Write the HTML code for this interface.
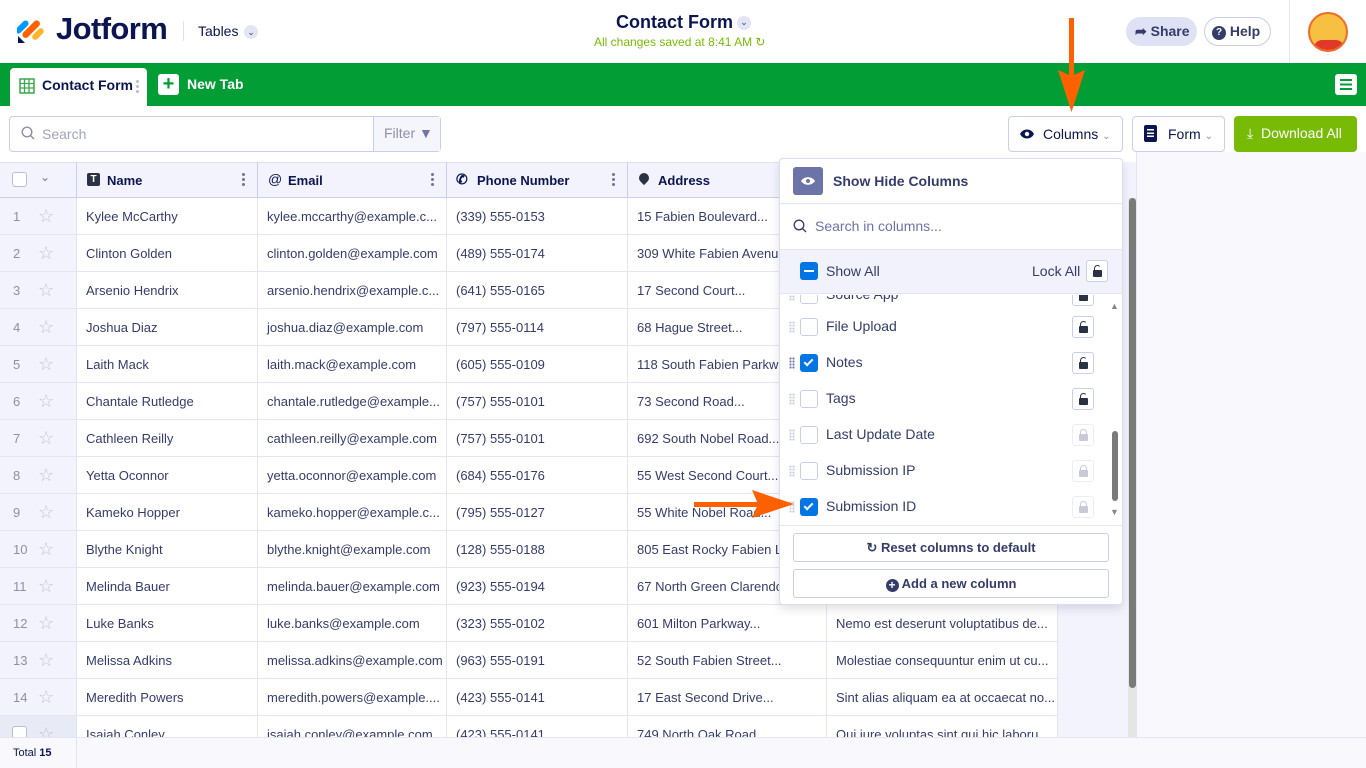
<!DOCTYPE html>
<html><head><meta charset="utf-8"><style>
*{box-sizing:border-box;margin:0;padding:0}
body{width:1366px;height:768px;overflow:hidden;font-family:"Liberation Sans",sans-serif;background:#fff;position:relative;color:#343c6a}
.abs{position:absolute}
.top{top:0;left:0;width:1366px;height:63px;background:#fff}
.green{top:63px;left:0;width:1366px;height:43px;background:#039d35}
.tab{left:10px;top:68px;width:137px;height:38px;background:#fff;border-radius:4px 4px 0 0;font-weight:bold;font-size:14px;color:#0a1551;padding:9px 0 0 32px}
.btn{border:1px solid #c8ceed;border-radius:4px;background:#fff;font-size:14px;color:#0a1551}
.hdr{top:162px;height:36px;background:#f3f3fe;border-bottom:1px solid #c8ceed;border-top:1px solid #dfe2f3}
.cell{position:absolute;height:37px;border-bottom:1px solid #e3e5f5;border-right:1px solid #e3e5f5;font-size:13px;color:#343c6a;padding:11px 0 0 9px;white-space:nowrap;overflow:hidden;background:#fff}
.lc{position:absolute;left:0;width:77px;height:37px;background:#f3f3fe;border-bottom:1px solid #e3e5f5;border-right:1px solid #dfe2f3;font-size:13px;color:#8d8fa8;padding:11px 0 0 13px}
.star{position:absolute;left:38px;top:9px;color:#c0c3d9;font-size:18px;line-height:18px}
.hc{position:absolute;top:162px;height:36px;border-right:1px solid #c8ceed;font-size:13px;font-weight:bold;color:#0a1551;padding:11px 0 0 30px}
.dots{position:absolute;right:12px;top:10px;width:3px;height:14px;background:radial-gradient(circle,#6f76a7 1.4px,transparent 1.6px) 0 0/3px 5px}
.panel{left:779px;top:158px;width:344px;height:447px;background:#fff;border:1px solid #dadef3;border-radius:4px;box-shadow:0 4px 10px rgba(0,0,0,.12)}
.prow{position:absolute;left:0;width:330px;height:36px;font-size:14px;color:#343c6a}
.cb{position:absolute;left:20px;top:9px;width:18px;height:18px;border:1px solid #c8ceed;border-radius:3px;background:#fff}
.cb.on{background:#0075e3;border-color:#0075e3}
.lock{position:absolute;left:292px;top:7px;width:22px;height:22px;border:1px solid #c8ceed;border-radius:3px;background:#fff}
.lock i{position:absolute;left:6px;top:9px;width:9px;height:7px;background:#2b3245;border-radius:1px}
.lock b{position:absolute;left:7px;top:4px;width:7px;height:7px;border:1.6px solid #2b3245;border-bottom:none;border-radius:4px 4px 0 0;border-right-color:transparent}
.lock.dis{border-color:#eceef7}.lock.dis i{background:#c8cad8}.lock.dis b{border-color:#c8cad8}
.grip{position:absolute;left:9px;top:12px;width:6px;height:12px;background:radial-gradient(circle,#c8ccde 1px,transparent 1.2px) 0 0/3px 3px}
</style></head><body>
<div class="abs top"></div>
<svg class="abs" style="left:17px;top:14px" width="28" height="30" viewBox="0 0 28 30">
<rect x="2" y="5" width="6" height="16" rx="3" transform="rotate(45 5 13)" fill="#0099ff"/>
<rect x="11" y="4" width="6.5" height="22" rx="3.2" transform="rotate(45 14 15)" fill="#ff6100"/>
<rect x="18" y="13" width="6" height="14" rx="3" transform="rotate(45 21 20)" fill="#ffb629"/>
<path d="M1 22 L1 29 L8 29 Z" fill="#0a1551"/>
</svg>
<div class="abs" style="left:56px;top:11px;font-size:31px;font-weight:bold;color:#0a1551;letter-spacing:-0.6px">Jotform</div>
<div class="abs" style="left:183px;top:21px;width:1px;height:20px;background:#dfe2f3"></div>
<div class="abs" style="left:198px;top:23px;font-size:14px;color:#0a1551">Tables</div>
<div class="abs" style="left:244px;top:25px;width:14px;height:14px;border-radius:7px;background:#e3e5f5;font-size:9px;text-align:center;line-height:14px;color:#343c6a">⌄</div>
<div class="abs" style="left:616px;top:12px;font-size:18px;font-weight:bold;color:#0a1551">Contact Form</div>
<div class="abs" style="left:737px;top:16px;width:14px;height:14px;border-radius:7px;background:#e3e5f5;font-size:9px;text-align:center;line-height:13px;color:#343c6a">⌄</div>
<div class="abs" style="left:594px;top:35px;font-size:12px;color:#78bb07">All changes saved at 8:41 AM ↻</div>
<div class="abs" style="left:1126px;top:17px;width:71px;height:29px;border-radius:15px;background:#dfe2f5;font-size:14px;font-weight:bold;color:#343c6a;padding:6px 0 0 9px">➦ Share</div>
<div class="abs" style="left:1204px;top:17px;width:67px;height:29px;border-radius:15px;border:1px solid #c8ceed;font-size:14px;font-weight:bold;color:#343c6a;padding:5px 0 0 7px"><span style="display:inline-block;width:14px;height:14px;border-radius:7px;background:#343c6a;color:#fff;font-size:10px;text-align:center;line-height:14px;vertical-align:1px">?</span> Help</div>
<div class="abs" style="left:1289px;top:0;width:1px;height:63px;background:#e3e5f5"></div>
<div class="abs" style="left:1308px;top:12px;width:40px;height:40px;border-radius:20px;background:#f8c043;border:2px solid #ef6a22;overflow:hidden"><div style="position:absolute;left:4px;top:26px;width:30px;height:14px;background:#e2382a;border-radius:8px 8px 0 0"></div></div>
<div class="abs green"></div>
<div class="abs tab">Contact Form<span style="position:absolute;right:8px;top:11px;width:3px;height:14px;background:radial-gradient(circle,#b8bdd8 1.4px,transparent 1.6px) 0 0/3px 5px"></span>
<svg style="position:absolute;left:9px;top:10px" width="16" height="16"><rect x="1" y="1" width="14" height="14" fill="none" stroke="#39a94d" stroke-width="1.5"/><path d="M1 5.5H15M1 10H15M5.5 1V15M10 1V15" stroke="#39a94d" stroke-width="1.3"/></svg></div>
<div class="abs" style="left:158px;top:74px;width:21px;height:21px;background:#fff;border-radius:3px;color:#039d35;font-size:20px;line-height:20px;text-align:center;font-weight:bold">+</div>
<div class="abs" style="left:187px;top:76px;font-size:14px;font-weight:bold;color:#fff">New Tab</div>
<div class="abs" style="left:1335px;top:74px;width:22px;height:21px;background:#fff;border-radius:3px"><div style="position:absolute;left:5px;top:5px;width:12px;height:11px;background:linear-gradient(#039d35 0 2px,transparent 2px 4.5px,#039d35 4.5px 6.5px,transparent 6.5px 9px,#039d35 9px 11px)"></div></div>
<div class="abs btn" style="left:9px;top:116px;width:432px;height:36px;"></div>
<div class="abs" style="left:373px;top:117px;width:67px;height:34px;background:#f5f6fc;border-left:1px solid #c8ceed;font-size:14px;color:#8d8fa8;padding:8px 0 0 10px">Filter <span style="color:#6f76a7">▼</span></div>
<svg class="abs" style="left:21px;top:126px" width="14" height="14"><circle cx="6" cy="6" r="4.8" fill="none" stroke="#8d8fa8" stroke-width="1.4"/><path d="M9.5 9.5L13 13" stroke="#8d8fa8" stroke-width="1.4"/></svg>
<div class="abs" style="left:42px;top:126px;font-size:14px;color:#a0a3bd">Search</div>
<div class="abs btn" style="left:1008px;top:116px;width:115px;height:36px;padding:9px 0 0 34px">Columns <span style="color:#8d8fa8;font-size:10px">⌄</span></div>
<svg class="abs" style="left:1019px;top:128px" width="16" height="12"><path d="M1 6C4 0 12 0 15 6C12 12 4 12 1 6Z" fill="#0a1551"/><circle cx="8" cy="6" r="2.2" fill="#fff"/></svg>
<div class="abs btn" style="left:1132px;top:116px;width:93px;height:36px;padding:9px 0 0 35px">Form <span style="color:#8d8fa8;font-size:10px">⌄</span></div>
<div class="abs" style="left:1144px;top:125px;width:13px;height:17px;background:#0a1551;border-radius:2px"><div style="margin:4px 3px;height:8px;background:linear-gradient(#fff 0 1.5px,transparent 1.5px 3.3px,#fff 3.3px 4.8px,transparent 4.8px 6.5px,#fff 6.5px 8px)"></div></div>
<div class="abs" style="left:1234px;top:116px;width:123px;height:36px;background:#78bb07;border-radius:4px;color:#fff;font-size:14px;padding:9px 0 0 13px">⤓&nbsp; Download All</div>
<div class="abs" style="left:1069px;top:18px;width:5px;height:60px;background:#ff6100"></div>
<svg class="abs" style="left:1058px;top:70px" width="27" height="42"><path d="M0 0L13.5 6L27 0L13.5 42Z" fill="#ff6100"/></svg>
<div class="abs" style="left:0;top:162px;width:1136px;height:575px;background:#f3f3fe"></div>
<div class="abs" style="left:1136px;top:152px;width:230px;height:585px;background:#f8f8fd;border-left:1px solid #e3e5f5"></div>
<div class="abs" style="left:1128px;top:198px;width:8px;height:539px;background:#e5e5e5"></div>
<div class="abs" style="left:1129px;top:198px;width:7px;height:490px;background:#7a7a7a;border-radius:4px"></div>
<div class="abs hdr" style="left:0;width:1058px"></div>
<div class="abs" style="left:12px;top:172px;width:15px;height:15px;border:1px solid #b8bdd8;border-radius:3px;background:#fff"></div>
<div class="abs" style="left:40px;top:170px;font-size:12px;color:#6f76a7">⌄</div>
<div class="abs" style="left:76px;top:162px;width:1px;height:36px;background:#c8ceed"></div>
<div class="hc" style="left:77px;width:181px">Name<span class="dots"></span><span style="position:absolute;left:10px;top:11px;width:13px;height:13px;background:#2b3245;border-radius:2px;color:#fff;font-size:10px;text-align:center;line-height:13px">T</span></div>
<div class="hc" style="left:258px;width:189px">Email<span class="dots"></span><span style="position:absolute;left:10px;top:9px;font-size:14px;font-weight:normal">@</span></div>
<div class="hc" style="left:447px;width:181px">Phone Number<span class="dots"></span><span style="position:absolute;left:9px;top:9px;font-size:14px">✆</span></div>
<div class="hc" style="left:628px;width:199px">Address<span style="position:absolute;left:11px;top:11px;width:10px;height:10px;border-radius:5px 5px 5px 0;transform:rotate(-45deg);background:#2b3245"></span></div>
<div class="hc" style="left:827px;width:231px">Notes</div>
<div class="abs" style="left:0;top:198px;width:1058px;height:539px;overflow:hidden">
<div style="position:absolute;top:0;left:0">
<div class="lc" style="top:0">1<span class="star">☆</span></div><div class="cell" style="top:0;left:77px;width:181px">Kylee McCarthy</div><div class="cell" style="top:0;left:258px;width:189px">kylee.mccarthy@example.c...</div><div class="cell" style="top:0;left:447px;width:181px">(339) 555-0153</div><div class="cell" style="top:0;left:628px;width:199px">15 Fabien Boulevard...</div><div class="cell" style="top:0;left:827px;width:231px"></div>
<div class="lc" style="top:37px">2<span class="star">☆</span></div><div class="cell" style="top:37px;left:77px;width:181px">Clinton Golden</div><div class="cell" style="top:37px;left:258px;width:189px">clinton.golden@example.com</div><div class="cell" style="top:37px;left:447px;width:181px">(489) 555-0174</div><div class="cell" style="top:37px;left:628px;width:199px">309 White Fabien Avenue</div><div class="cell" style="top:37px;left:827px;width:231px"></div>
<div class="lc" style="top:74px">3<span class="star">☆</span></div><div class="cell" style="top:74px;left:77px;width:181px">Arsenio Hendrix</div><div class="cell" style="top:74px;left:258px;width:189px">arsenio.hendrix@example.c...</div><div class="cell" style="top:74px;left:447px;width:181px">(641) 555-0165</div><div class="cell" style="top:74px;left:628px;width:199px">17 Second Court...</div><div class="cell" style="top:74px;left:827px;width:231px"></div>
<div class="lc" style="top:111px">4<span class="star">☆</span></div><div class="cell" style="top:111px;left:77px;width:181px">Joshua Diaz</div><div class="cell" style="top:111px;left:258px;width:189px">joshua.diaz@example.com</div><div class="cell" style="top:111px;left:447px;width:181px">(797) 555-0114</div><div class="cell" style="top:111px;left:628px;width:199px">68 Hague Street...</div><div class="cell" style="top:111px;left:827px;width:231px"></div>
<div class="lc" style="top:148px">5<span class="star">☆</span></div><div class="cell" style="top:148px;left:77px;width:181px">Laith Mack</div><div class="cell" style="top:148px;left:258px;width:189px">laith.mack@example.com</div><div class="cell" style="top:148px;left:447px;width:181px">(605) 555-0109</div><div class="cell" style="top:148px;left:628px;width:199px">118 South Fabien Parkway</div><div class="cell" style="top:148px;left:827px;width:231px"></div>
<div class="lc" style="top:185px">6<span class="star">☆</span></div><div class="cell" style="top:185px;left:77px;width:181px">Chantale Rutledge</div><div class="cell" style="top:185px;left:258px;width:189px">chantale.rutledge@example...</div><div class="cell" style="top:185px;left:447px;width:181px">(757) 555-0101</div><div class="cell" style="top:185px;left:628px;width:199px">73 Second Road...</div><div class="cell" style="top:185px;left:827px;width:231px"></div>
<div class="lc" style="top:222px">7<span class="star">☆</span></div><div class="cell" style="top:222px;left:77px;width:181px">Cathleen Reilly</div><div class="cell" style="top:222px;left:258px;width:189px">cathleen.reilly@example.com</div><div class="cell" style="top:222px;left:447px;width:181px">(757) 555-0101</div><div class="cell" style="top:222px;left:628px;width:199px">692 South Nobel Road...</div><div class="cell" style="top:222px;left:827px;width:231px"></div>
<div class="lc" style="top:259px">8<span class="star">☆</span></div><div class="cell" style="top:259px;left:77px;width:181px">Yetta Oconnor</div><div class="cell" style="top:259px;left:258px;width:189px">yetta.oconnor@example.com</div><div class="cell" style="top:259px;left:447px;width:181px">(684) 555-0176</div><div class="cell" style="top:259px;left:628px;width:199px">55 West Second Court...</div><div class="cell" style="top:259px;left:827px;width:231px"></div>
<div class="lc" style="top:296px">9<span class="star">☆</span></div><div class="cell" style="top:296px;left:77px;width:181px">Kameko Hopper</div><div class="cell" style="top:296px;left:258px;width:189px">kameko.hopper@example.c...</div><div class="cell" style="top:296px;left:447px;width:181px">(795) 555-0127</div><div class="cell" style="top:296px;left:628px;width:199px">55 White Nobel Road...</div><div class="cell" style="top:296px;left:827px;width:231px"></div>
<div class="lc" style="top:333px">10<span class="star">☆</span></div><div class="cell" style="top:333px;left:77px;width:181px">Blythe Knight</div><div class="cell" style="top:333px;left:258px;width:189px">blythe.knight@example.com</div><div class="cell" style="top:333px;left:447px;width:181px">(128) 555-0188</div><div class="cell" style="top:333px;left:628px;width:199px">805 East Rocky Fabien Lane</div><div class="cell" style="top:333px;left:827px;width:231px"></div>
<div class="lc" style="top:370px">11<span class="star">☆</span></div><div class="cell" style="top:370px;left:77px;width:181px">Melinda Bauer</div><div class="cell" style="top:370px;left:258px;width:189px">melinda.bauer@example.com</div><div class="cell" style="top:370px;left:447px;width:181px">(923) 555-0194</div><div class="cell" style="top:370px;left:628px;width:199px">67 North Green Clarendon</div><div class="cell" style="top:370px;left:827px;width:231px"></div>
<div class="lc" style="top:407px">12<span class="star">☆</span></div><div class="cell" style="top:407px;left:77px;width:181px">Luke Banks</div><div class="cell" style="top:407px;left:258px;width:189px">luke.banks@example.com</div><div class="cell" style="top:407px;left:447px;width:181px">(323) 555-0102</div><div class="cell" style="top:407px;left:628px;width:199px">601 Milton Parkway...</div><div class="cell" style="top:407px;left:827px;width:231px">Nemo est deserunt voluptatibus de...</div>
<div class="lc" style="top:444px">13<span class="star">☆</span></div><div class="cell" style="top:444px;left:77px;width:181px">Melissa Adkins</div><div class="cell" style="top:444px;left:258px;width:189px">melissa.adkins@example.com</div><div class="cell" style="top:444px;left:447px;width:181px">(963) 555-0191</div><div class="cell" style="top:444px;left:628px;width:199px">52 South Fabien Street...</div><div class="cell" style="top:444px;left:827px;width:231px">Molestiae consequuntur enim ut cu...</div>
<div class="lc" style="top:481px">14<span class="star">☆</span></div><div class="cell" style="top:481px;left:77px;width:181px">Meredith Powers</div><div class="cell" style="top:481px;left:258px;width:189px">meredith.powers@example....</div><div class="cell" style="top:481px;left:447px;width:181px">(423) 555-0141</div><div class="cell" style="top:481px;left:628px;width:199px">17 East Second Drive...</div><div class="cell" style="top:481px;left:827px;width:231px">Sint alias aliquam ea at occaecat no...</div>
<div class="lc" style="top:518px;background:#e8eaf6"><span style="position:absolute;left:12px;top:10px;width:15px;height:15px;border:1px solid #b8bdd8;border-radius:3px;background:#fff"></span><span class="star">☆</span></div><div class="cell" style="top:518px;left:77px;width:181px">Isaiah Conley</div><div class="cell" style="top:518px;left:258px;width:189px">isaiah.conley@example.com</div><div class="cell" style="top:518px;left:447px;width:181px">(423) 555-0141</div><div class="cell" style="top:518px;left:628px;width:199px">749 North Oak Road</div><div class="cell" style="top:518px;left:827px;width:231px">Qui iure voluptas sint qui hic laboru...</div>
</div></div>
<div class="abs" style="left:0;top:737px;width:1366px;height:31px;background:#f8f8fd;border-top:1px solid #e3e5f5"></div>
<div class="abs" style="left:76px;top:737px;width:1px;height:31px;background:#e3e5f5"></div>
<div class="abs" style="left:13px;top:747px;font-size:11px;color:#0a1551">Total <b>15</b></div>
<div class="abs panel">
<div style="position:absolute;left:13px;top:8px;width:30px;height:28px;background:#6c73a8;border-radius:3px"><svg style="position:absolute;left:7px;top:9px" width="16" height="10"><path d="M1 5C4 0 12 0 15 5C12 10 4 10 1 5Z" fill="#fff"/><circle cx="8" cy="5" r="2" fill="#6c73a8"/></svg></div>
<div style="position:absolute;left:53px;top:14px;font-size:14px;font-weight:bold;color:#343c6a">Show Hide Columns</div>
<div style="position:absolute;left:0;top:44px;width:342px;height:1px;background:#e3e5f5"></div>
<svg style="position:absolute;left:13px;top:60px" width="14" height="14"><circle cx="6" cy="6" r="4.8" fill="none" stroke="#343c6a" stroke-width="1.3"/><path d="M9.5 9.5L13 13" stroke="#343c6a" stroke-width="1.3"/></svg>
<div style="position:absolute;left:35px;top:59px;font-size:14px;color:#6c73a8">Search in columns...</div>
<div style="position:absolute;left:0;top:90px;width:342px;height:45px;background:#f1f2fb;border-top:1px solid #e3e5f5;border-bottom:1px solid #e3e5f5"></div>
<div style="position:absolute;left:20px;top:103px;width:18px;height:18px;background:#0075e3;border-radius:3px"><div style="margin:8px 4px;height:2px;background:#fff"></div></div>
<div style="position:absolute;left:46px;top:104px;font-size:14px;color:#343c6a">Show All</div>
<div style="position:absolute;left:252px;top:104px;font-size:14px;color:#343c6a">Lock All</div>
<div class="lock" style="left:306px;top:101px"><b></b><i></i></div>
<div style="position:absolute;left:0;top:136px;width:342px;height:230px;overflow:hidden">
<div class="prow" style="top:-18px"><span class="grip"></span><span class="cb"></span><span style="position:absolute;left:46px;top:9px">Source App</span><span class="lock"><b></b><i></i></span></div>
<div class="prow" style="top:14px"><span class="grip"></span><span class="cb"></span><span style="position:absolute;left:46px;top:9px">File Upload</span><span class="lock"><b></b><i></i></span></div>
<div class="prow" style="top:50px"><span class="grip" style="background:radial-gradient(circle,#6f76a7 1px,transparent 1.2px) 0 0/3px 3px"></span><span class="cb on"><span style="position:absolute;left:5px;top:2px;width:5px;height:9px;border:solid #fff;border-width:0 2px 2px 0;transform:rotate(45deg)"></span></span><span style="position:absolute;left:46px;top:9px">Notes</span><span class="lock"><b></b><i></i></span></div>
<div class="prow" style="top:86px"><span class="grip"></span><span class="cb"></span><span style="position:absolute;left:46px;top:9px">Tags</span><span class="lock"><b></b><i></i></span></div>
<div class="prow" style="top:122px"><span class="grip"></span><span class="cb"></span><span style="position:absolute;left:46px;top:9px">Last Update Date</span><span class="lock dis"><b></b><i></i></span></div>
<div class="prow" style="top:158px"><span class="grip"></span><span class="cb"></span><span style="position:absolute;left:46px;top:9px">Submission IP</span><span class="lock dis"><b></b><i></i></span></div>
<div class="prow" style="top:194px"><span class="grip"></span><span class="cb on"><span style="position:absolute;left:5px;top:2px;width:5px;height:9px;border:solid #fff;border-width:0 2px 2px 0;transform:rotate(45deg)"></span></span><span style="position:absolute;left:46px;top:9px">Submission ID</span><span class="lock dis"><b></b><i></i></span></div>
</div>
<div style="position:absolute;left:330px;top:142px;font-size:9px;color:#888">▲</div>
<div style="position:absolute;left:332px;top:272px;width:6px;height:70px;background:#7a7a7a;border-radius:3px"></div>
<div style="position:absolute;left:330px;top:348px;font-size:9px;color:#888">▼</div>
<div style="position:absolute;left:0;top:366px;width:342px;height:1px;background:#e3e5f5"></div>
<div style="position:absolute;left:13px;top:374px;width:316px;height:29px;border:1px solid #c8ceed;border-radius:3px;text-align:center;font-size:13px;font-weight:bold;color:#343c6a;padding-top:6px">↻ Reset columns to default</div>
<div style="position:absolute;left:13px;top:410px;width:316px;height:29px;border:1px solid #c8ceed;border-radius:3px;text-align:center;font-size:13px;font-weight:bold;color:#343c6a;padding-top:6px"><span style="display:inline-block;width:13px;height:13px;border-radius:7px;background:#343c6a;color:#fff;font-size:12px;line-height:12px;vertical-align:-1px">+</span> Add a new column</div>
</div>
<div class="abs" style="left:694px;top:502px;width:70px;height:5px;background:#ff6100"></div>
<svg class="abs" style="left:752px;top:490px" width="42" height="28"><path d="M0 0L6 14L0 28L42 14Z" fill="#ff6100"/></svg>
</body></html>
